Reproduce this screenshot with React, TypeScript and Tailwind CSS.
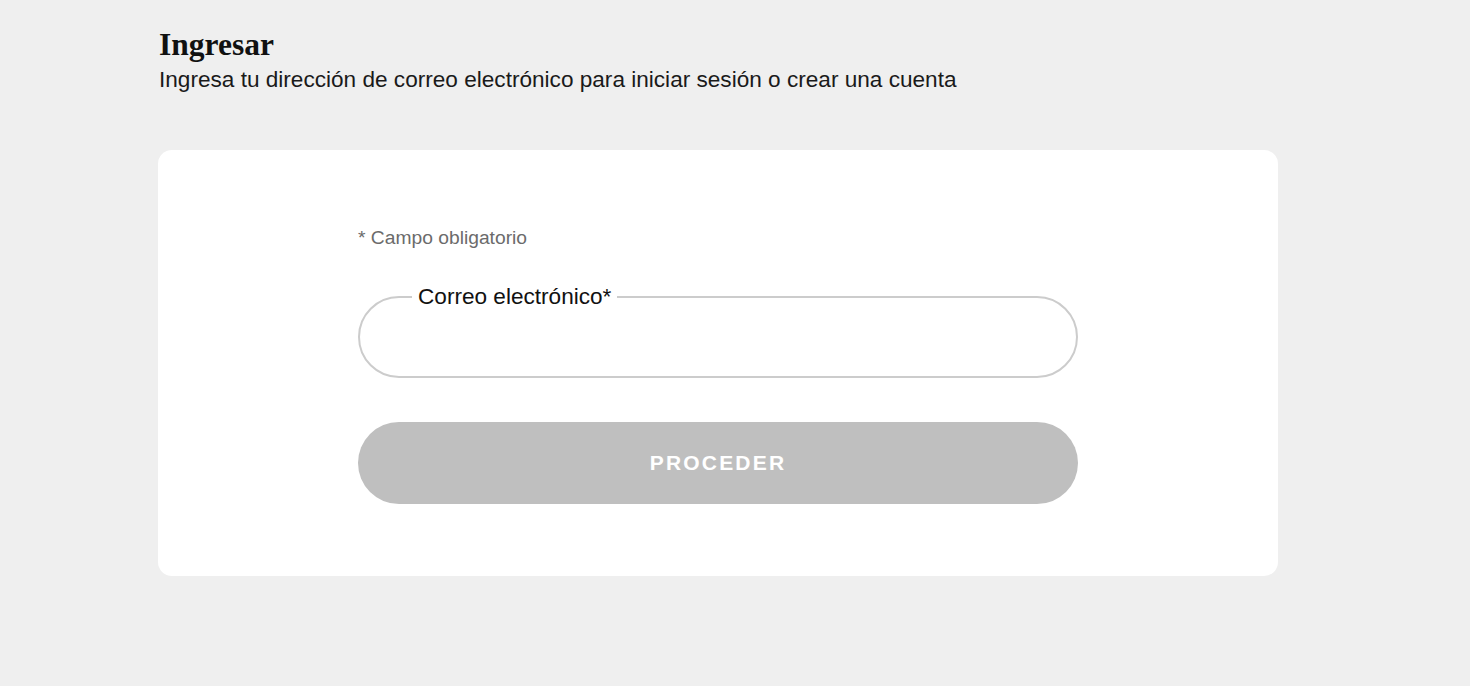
export default function App() {
  return (
    <div className="min-h-[686px] w-full bg-[#efefef] pt-[28px]" style={{ fontFamily: '"Liberation Sans", Arial, sans-serif' }}>
      <div className="ml-[158px] w-[1120px]">
        <div className="pl-[1px]">
          <h1 className="text-[31.5px] leading-[34px] font-bold text-[#111]" style={{ fontFamily: '"Liberation Serif", "Times New Roman", serif' }}>
            Ingresar
          </h1>
          <p className="mt-[4px] text-[22.6px] leading-[28px] text-[#1a1a1a]">
            Ingresa tu dirección de correo electrónico para iniciar sesión o crear una cuenta
          </p>
        </div>
        <div className="mt-[56px] rounded-[14px] bg-white px-[200px] pt-[76px] pb-[72px]">
          <p className="text-[19.25px] leading-[24px] text-[#6b6b6b]">* Campo obligatorio</p>
          <fieldset className="mt-[34px] rounded-full border-2 border-[#cccccc] pl-[52px] pr-[20px]">
            <legend className="px-[6px] text-[22.6px] leading-[26px] text-[#111]">Correo electrónico*</legend>
            <input type="email" className="h-[66px] w-full bg-transparent text-[20px] outline-none" />
          </fieldset>
          <button className="mt-[44px] flex h-[82px] w-full items-center justify-center rounded-full bg-[#bfbfbf] text-[21px] font-bold tracking-[2.2px] text-white">
            PROCEDER
          </button>
        </div>
      </div>
    </div>
  );
}
